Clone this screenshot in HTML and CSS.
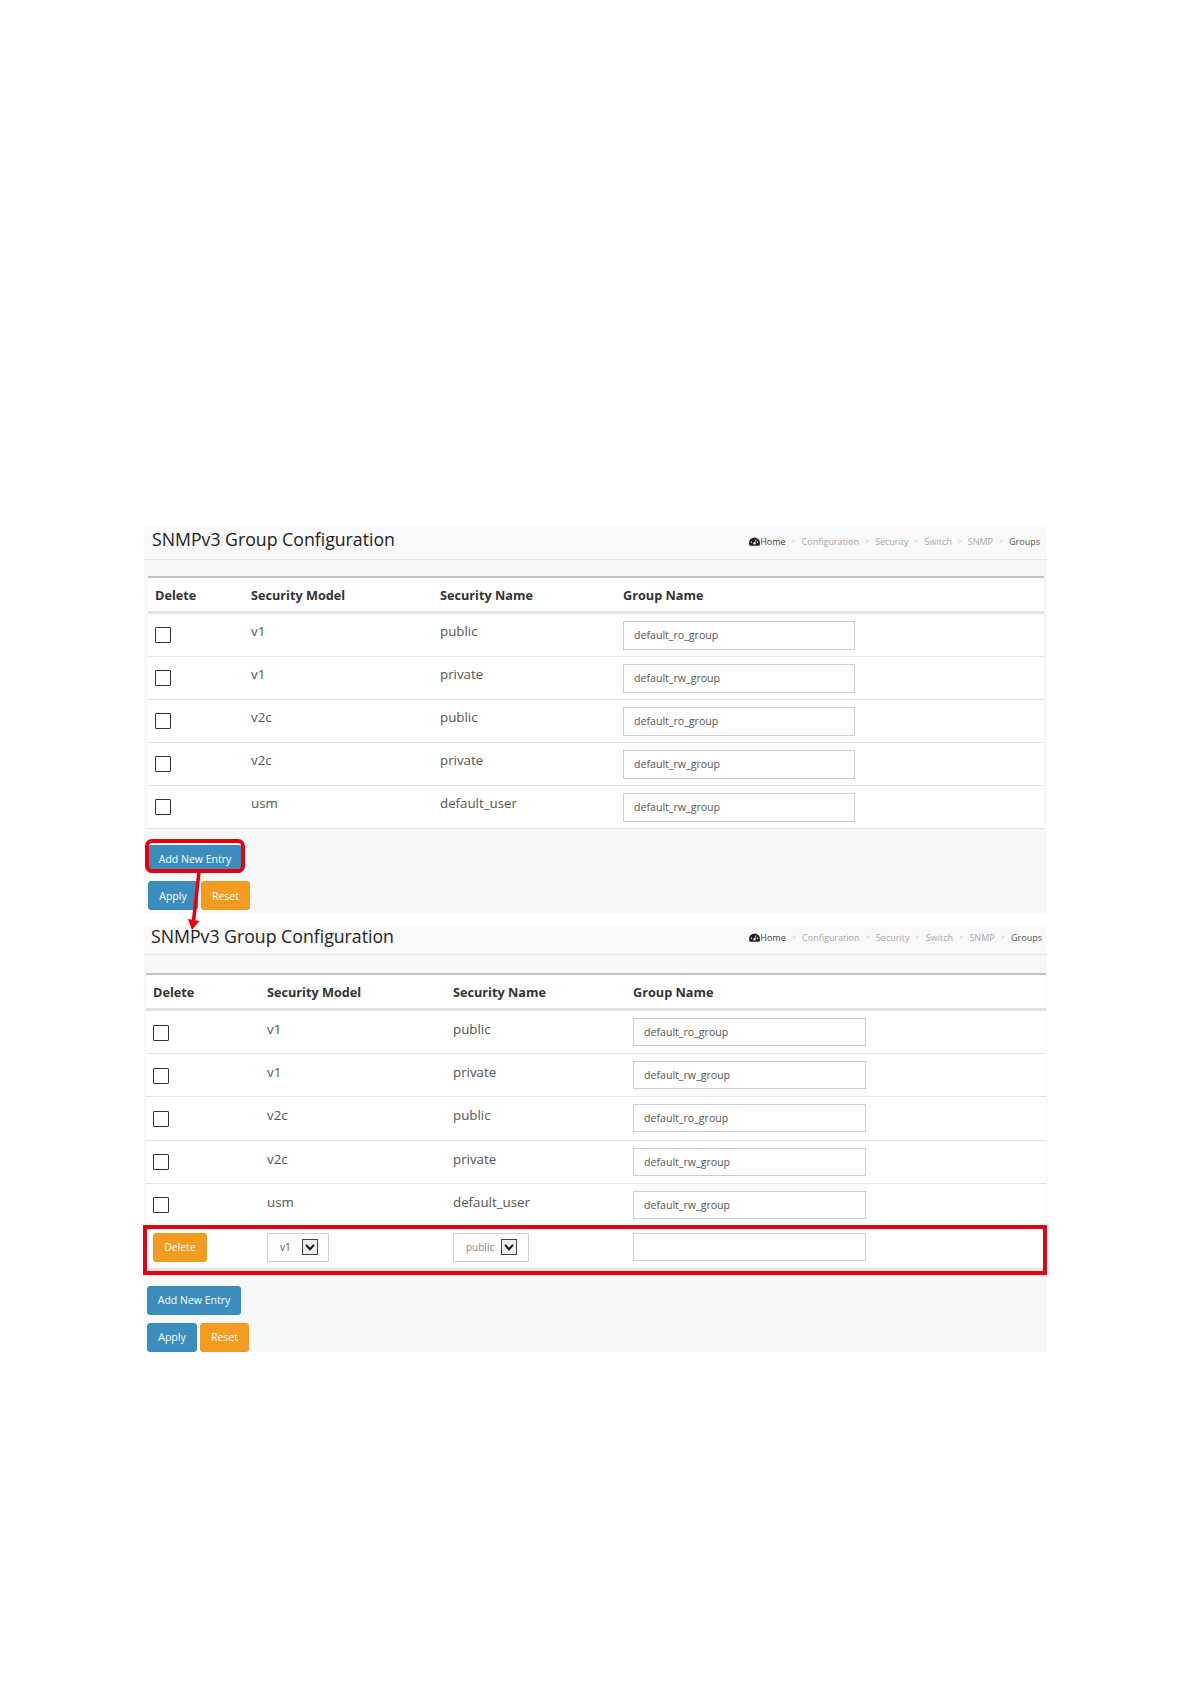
FILE: index.html
```html
<!DOCTYPE html>
<html lang="en">
<head>
<meta charset="utf-8">
<title>SNMPv3 Group Configuration</title>
<link rel="stylesheet" href="styles.css">
</head>
<body>
<main class="doc">
  <section class="panel panel-a">
    <header class="band">
      <h1 class="title">SNMPv3 Group Configuration</h1>
      <nav class="crumbs">
        <svg class="gauge" viewBox="0 0 16 12"><path d="M8 0a8 8 0 0 0-8 8c0 1.500.4 2.800 1.100 4h13.800c.7-1.200 1.100-2.500 1.100-4a8 8 0 0 0-8-8z" fill="#222"/><circle cx="8" cy="8.500" r="1.700" fill="#fff"/><path d="M8 8.500 10.500 3" stroke="#fff" stroke-width="1.200"/><circle cx="3.500" cy="7" r="1" fill="#fff"/><circle cx="12.500" cy="7" r="1" fill="#fff"/></svg>
        <span class="crumb-home">Home</span><i>&gt;</i><span>Configuration</span><i>&gt;</i><span>Security</span><i>&gt;</i><span>Switch</span><i>&gt;</i><span>SNMP</span><i>&gt;</i><span class="crumb-now">Groups</span>
      </nav>
    </header>
    <div class="table">
      <div class="row head"><div>Delete</div><div>Security Model</div><div>Security Name</div><div>Group Name</div></div>
      <div class="row"><div><input class="check" type="checkbox"></div><div class="up">v1</div><div class="up">public</div><div><input class="field" value="default_ro_group"></div></div>
      <div class="row"><div><input class="check" type="checkbox"></div><div class="up">v1</div><div class="up">private</div><div><input class="field" value="default_rw_group"></div></div>
      <div class="row"><div><input class="check" type="checkbox"></div><div class="up">v2c</div><div class="up">public</div><div><input class="field" value="default_ro_group"></div></div>
      <div class="row"><div><input class="check" type="checkbox"></div><div class="up">v2c</div><div class="up">private</div><div><input class="field" value="default_rw_group"></div></div>
      <div class="row"><div><input class="check" type="checkbox"></div><div class="up">usm</div><div class="up">default_user</div><div><input class="field" value="default_rw_group"></div></div>
    </div>
    <div class="actions">
      <div class="btn-row"><button class="btn blue btn-add">Add New Entry</button></div>
      <div class="btn-row"><button class="btn blue btn-apply">Apply</button><button class="btn orange btn-reset">Reset</button></div>
    </div>
  </section>

  <section class="panel panel-b">
    <header class="band">
      <h1 class="title">SNMPv3 Group Configuration</h1>
      <nav class="crumbs">
        <svg class="gauge" viewBox="0 0 16 12"><path d="M8 0a8 8 0 0 0-8 8c0 1.500.4 2.800 1.100 4h13.800c.7-1.200 1.100-2.500 1.100-4a8 8 0 0 0-8-8z" fill="#222"/><circle cx="8" cy="8.500" r="1.700" fill="#fff"/><path d="M8 8.500 10.500 3" stroke="#fff" stroke-width="1.200"/><circle cx="3.500" cy="7" r="1" fill="#fff"/><circle cx="12.500" cy="7" r="1" fill="#fff"/></svg>
        <span class="crumb-home">Home</span><i>&gt;</i><span>Configuration</span><i>&gt;</i><span>Security</span><i>&gt;</i><span>Switch</span><i>&gt;</i><span>SNMP</span><i>&gt;</i><span class="crumb-now">Groups</span>
      </nav>
    </header>
    <div class="table">
      <div class="row head"><div>Delete</div><div>Security Model</div><div>Security Name</div><div>Group Name</div></div>
      <div class="row"><div><input class="check" type="checkbox"></div><div class="up">v1</div><div class="up">public</div><div><input class="field" value="default_ro_group"></div></div>
      <div class="row"><div><input class="check" type="checkbox"></div><div class="up">v1</div><div class="up">private</div><div><input class="field" value="default_rw_group"></div></div>
      <div class="row"><div><input class="check" type="checkbox"></div><div class="up">v2c</div><div class="up">public</div><div><input class="field" value="default_ro_group"></div></div>
      <div class="row"><div><input class="check" type="checkbox"></div><div class="up">v2c</div><div class="up">private</div><div><input class="field" value="default_rw_group"></div></div>
      <div class="row"><div><input class="check" type="checkbox"></div><div class="up">usm</div><div class="up">default_user</div><div><input class="field" value="default_rw_group"></div></div>
      <div class="row row-new">
        <div><button class="btn orange btn-delete">Delete</button></div>
        <div><div class="pick pick-model"><span class="pick-value">v1</span><span class="pick-arrow"><svg viewBox="0 0 16 16"><path d="M3.500 5.500 8 10.500 12.500 5.500" fill="none" stroke="#111" stroke-width="2.200"/></svg></span></div></div>
        <div><div class="pick pick-name"><span class="pick-value pick-muted">public</span><span class="pick-arrow"><svg viewBox="0 0 16 16"><path d="M3.500 5.500 8 10.500 12.500 5.500" fill="none" stroke="#111" stroke-width="2.200"/></svg></span></div></div>
        <div><input class="field" value=""></div>
      </div>
    </div>
    <div class="actions">
      <div class="btn-row"><button class="btn blue btn-add">Add New Entry</button></div>
      <div class="btn-row"><button class="btn blue btn-apply">Apply</button><button class="btn orange btn-reset">Reset</button></div>
    </div>
  </section>

  <div class="mark mark-add"></div>
  <div class="mark mark-row"></div>
  <svg class="arrow" viewBox="0 0 20 70"><path d="M13 1 7.500 50" stroke="#e8000f" stroke-width="3.500" fill="none"/><path d="M2 48 13.500 50 6 59z" fill="#e8000f"/></svg>
</main>
</body>
</html>
```
FILE: styles.css
```css
* { box-sizing: border-box; }
html, body { margin: 0; background: #fff; }
body { font-family: "Open Sans", "Noto Sans", sans-serif; color: #444; }

.doc { position: relative; width: 1191px; height: 1684px; padding: 527px 144px 0; }

.panel { width: 903px; background: #f7f8f8; display: flex; flex-direction: column; }
.panel-a { height: 386px; margin-bottom: 14px; }
.panel-b { height: 425px; }

.band { display: flex; align-items: center; justify-content: space-between; border-bottom: 1px solid #e6e6e6; background: #f9f9f9; }
.panel-a .band { height: 33px; padding: 0 7px 8px 8px; }
.panel-b .band { height: 28px; padding: 0 5px 10px 7px; }

.title { margin: 0; font-size: 17.700px; font-weight: 400; color: #222; line-height: 24px; white-space: nowrap; }

.crumbs { display: flex; align-items: center; margin-top: 4px; font-size: 9px; color: #a9a9a9; white-space: nowrap; }
.crumbs i { font-style: normal; font-size: 7px; color: #c8c8c8; margin: 0 6px; }
.crumb-home { color: #444; }
.crumb-now { color: #555; }
.gauge { width: 11px; height: 9px; }
.panel-b .crumbs i { margin: 0 6.200px; }

.table { background: #fff; border-top: 2px solid #c2c2c2; }
.panel-a .table { margin: 16px 3px 0 4px; }
.panel-b .table { margin: 18px 1px 0 2px; }

.row { display: grid; height: 43px; align-items: center; border-bottom: 1px solid #e4e4e4; font-size: 13.300px; color: #555; }
.panel-a .row { grid-template-columns: 96px 189px 183px 1fr; }
.panel-b .row { grid-template-columns: 114px 186px 180px 1fr; height: 43.200px; }
.row > div { padding-left: 7px; }
.up { position: relative; top: -3px; }
.panel-a .up { top: -4px; }

.panel-a .row.head, .panel-b .row.head { height: 36px; font-size: 12.700px; font-weight: 700; color: #333; border-bottom: 3px solid #e2e2e2; padding-top: 1px; }
.panel-b .row.row-new { height: 44px; border-bottom: 3px solid #e6e6e6; }

.check { appearance: none; display: block; width: 16px; height: 16px; margin: 1px 0 0; border: 1.500px solid #333; border-radius: 1px; background: #fff; }
.panel-a .check { margin: 0; }

.field { display: block; width: 233px; height: 29px; padding: 0 10px; border: 1px solid #cfcfcf; background: #fff; font: 10.600px "Open Sans", sans-serif; color: #555; outline: none; }
.panel-a .field { width: 232px; }
.panel-b .field { height: 28px; }

.actions { display: flex; flex-direction: column; }
.panel-a .actions { padding: 16px 0 0 4px; gap: 8px; }
.panel-b .actions { padding: 15px 0 0 3px; gap: 8px; }
.btn-row { display: flex; gap: 3px; }

.btn { height: 29px; padding: 0; border: 1px solid transparent; border-radius: 3px; font: 10.500px "Open Sans", sans-serif; color: #fff; }
.blue { background: #3b8dbd; border-color: #3a87b4; }
.orange { background: #f39c1f; border-color: #ea9a25; }
.btn-add { width: 94px; }
.panel-a .btn-add { height: 28px; }
.btn-apply { width: 50px; }
.btn-reset { width: 49px; }
.btn-delete { display: block; width: 54px; }

.pick { display: flex; align-items: center; justify-content: space-between; height: 29px; border: 1px solid #d0d0d0; background: #fff; font-size: 10px; color: #555; }
.pick-model { width: 62px; padding: 0 10px 0 12px; }
.pick-name { width: 76px; padding: 0 11px 0 12px; }
.pick-muted { color: #8a8a8a; }
.pick-arrow { display: block; width: 16px; height: 16px; border: 1px solid #444; background: #eee; }
.pick-arrow svg { display: block; width: 100%; height: 100%; }

.mark { position: absolute; border: 4px solid #e8000f; pointer-events: none; }
.mark-add { left: 145px; top: 839px; width: 100px; height: 34px; border-radius: 7px; }
.mark-row { left: 143px; top: 1225px; width: 904px; height: 50px; }
.arrow { position: absolute; left: 186px; top: 871px; width: 20px; height: 70px; overflow: visible; }
```
